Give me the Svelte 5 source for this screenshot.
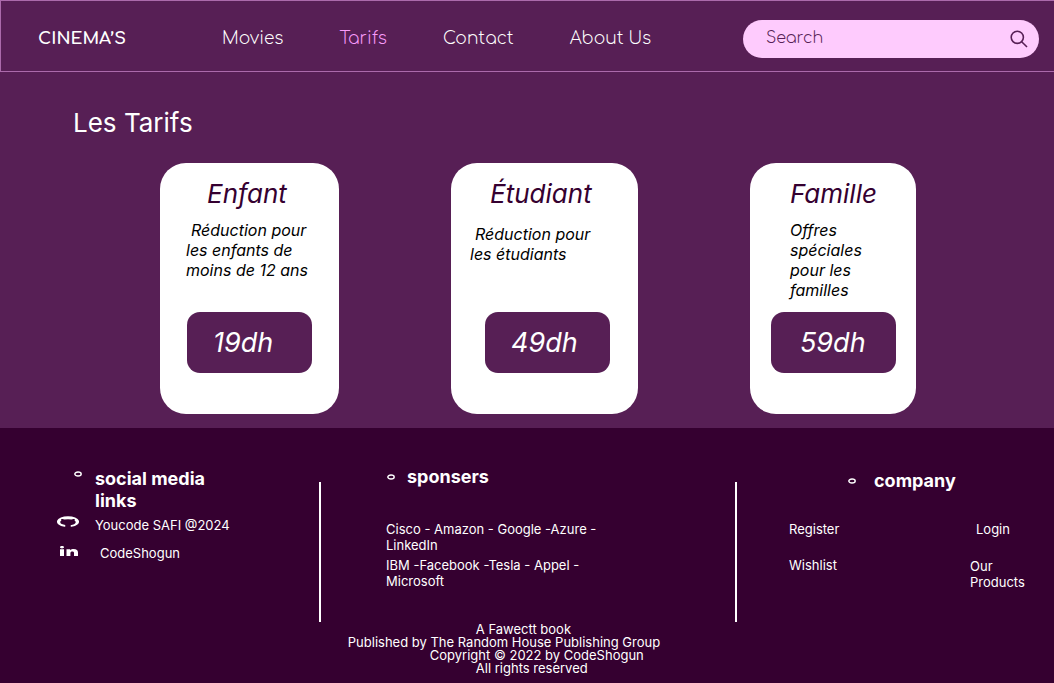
<script>
  const links = ['Movies', 'Tarifs', 'Contact', 'About Us'];
  const active = 'Tarifs';

  const plans = [
    { kind: 'child', name: 'Enfant', text: 'Réduction pour les enfants de moins de 12 ans', price: '19dh', indent: true },
    { kind: 'student', name: 'Étudiant', text: 'Réduction pour les étudiants', price: '49dh', indent: true },
    { kind: 'family', name: 'Famille', text: 'Offres spéciales pour les familles', price: '59dh', indent: false }
  ];
</script>

{#snippet ring()}
  <svg class="ring" viewBox="0 0 8 6" aria-hidden="true">
    <ellipse cx="4" cy="3" rx="3.2" ry="2" fill="none" stroke="currentColor" stroke-width="1.4" />
  </svg>
{/snippet}

<header class="topbar">
  <a class="brand" href="#home">CINEMA’S</a>
  <nav>
    {#each links as link}
      <a href="#{link}" class:active={link === active}>{link}</a>
    {/each}
  </nav>
  <form class="search" role="search">
    <input type="search" placeholder="Search" aria-label="Search" />
    <button type="button" aria-label="Submit search">
      <svg viewBox="0 0 18 18" aria-hidden="true">
        <circle cx="7.3" cy="7.3" r="6.1" />
        <path d="M11.7 11.7 17 17" />
      </svg>
    </button>
  </form>
</header>

<main>
  <h1>Les Tarifs</h1>
  <div class="plans">
    {#each plans as plan}
      <article class="plan {plan.kind}">
        <h2>{plan.name}</h2>
        <p class:indent={plan.indent}>{plan.text}</p>
        <button type="button">{plan.price}</button>
      </article>
    {/each}
  </div>
</main>

<footer>
  <div class="columns">
    <section class="social">
      <span class="mark">{@render ring()}</span>
      <h3>social media links</h3>
      <span class="mark">
        <svg class="github" viewBox="0 0 24 24" preserveAspectRatio="none" aria-hidden="true">
          <path d="M12 .3a12 12 0 0 0-3.8 23.4c.6.1.8-.3.8-.6v-3.600c-2.600-.5-5.500-1.600-5.500-6.700 0-1.200.5-2.300 1.300-3.100-.2-.4-.6-1.600 0-3.200 0 0 1-.3 3.400 1.200a11.500 11.500 0 0 1 7.600 0c2.300-1.500 3.300-1.200 3.300-1.200.6 1.600.2 2.800 0 3.200.9.8 1.300 1.900 1.300 3.200 0 4.600-2.800 6-5.400 6.600v3.600c0 .3.1.7.8.6A12 12 0 0 0 12 .3" />
        </svg>
      </span>
      <a href="#youcode">Youcode SAFI @2024</a>
      <span class="mark">
        <svg class="linkedin" viewBox="0 0 18 10" aria-hidden="true">
          <path d="M0 3.3h4V10H0zM0 1.2C0 .5.8 0 2 0s2 .5 2 1.2-.8 1.2-2 1.2S0 1.9 0 1.2zM6.5 3.3h3.7v.9c.7-.7 1.9-1.1 3.4-1.1 3 0 4.4 1.2 4.4 3.4V10h-4V6.9c0-1-.5-1.5-1.7-1.5s-1.9.6-1.9 1.6v3H6.5z" />
        </svg>
      </span>
      <a class="shogun" href="#codeshogun">CodeShogun</a>
    </section>

    <div class="divider"></div>

    <section class="sponsors">
      <h3>{@render ring()}sponsers</h3>
      <p>Cisco - Amazon - Google -Azure - LinkedIn</p>
      <p>IBM -Facebook -Tesla - Appel - Microsoft</p>
    </section>

    <div class="divider"></div>

    <section class="company">
      <h3>{@render ring()}company</h3>
      <div class="company-links">
        <a href="#register">Register</a>
        <a class="login" href="#login">Login</a>
        <a href="#wishlist">Wishlist</a>
        <a class="products" href="#products">Our Products</a>
      </div>
    </section>
  </div>

  <div class="legal">
    <p class="step-two">A Fawectt book</p>
    <p>Published by The Random House Publishing Group</p>
    <p class="step-one">Copyright © 2022 by CodeShogun</p>
    <p class="step-two">All rights reserved</p>
  </div>
</footer>

<style>
  :global(body) {
    margin: 0;
    background: #350030;
    font-family: Inter, sans-serif;
    color: #fff;
  }

  h1, h2, h3, p {
    margin: 0;
    font-weight: 400;
  }

  a {
    color: inherit;
    text-decoration: none;
  }

  button {
    font: inherit;
    color: inherit;
    border: 0;
    cursor: pointer;
  }

  .topbar {
    box-sizing: border-box;
    min-height: 72px;
    display: flex;
    align-items: center;
    padding: 6px 15px 0 37px;
    border: solid #ab6aab;
    border-width: 1px 0 1px 1px;
    background: #571f55;
    font-family: Comfortaa, sans-serif;
    font-size: 17px;
    line-height: 24px;
  }

  .brand {
    width: 184px;
    font-weight: 700;
  }

  nav {
    flex: 1;
    display: flex;
    gap: 56px;
    font-weight: 300;
  }

  nav .active {
    color: #f99bfb;
  }

  .search {
    box-sizing: border-box;
    width: 296px;
    height: 38px;
    display: flex;
    align-items: center;
    padding: 0 11px 0 23px;
    border-radius: 19px;
    background: #fecbfd;
    color: #571f55;
  }

  .search input {
    flex: 1;
    min-width: 0;
    padding: 0 0 3px;
    border: 0;
    outline: 0;
    background: none;
    font: inherit;
    font-size: 16px;
    font-weight: 300;
    color: inherit;
  }

  .search input::placeholder {
    color: inherit;
    opacity: 1;
  }

  .search button {
    display: flex;
    padding: 0;
    background: none;
  }

  .search svg {
    width: 18px;
    height: 18px;
    fill: none;
    stroke: currentColor;
    stroke-width: 1.6;
  }

  main {
    padding: 33px 0 14px;
    background: #571f55;
  }

  h1 {
    padding-left: 73px;
    font-size: 26px;
    line-height: 36px;
  }

  .plans {
    display: grid;
    grid-template-columns: 179fr 187fr 166fr;
    gap: 112px;
    padding: 22px 138px 0 160px;
  }

  .plan {
    box-sizing: border-box;
    min-height: 251px;
    display: flex;
    flex-direction: column;
    padding: 14px 0 41px;
    border-radius: 26px;
    background: #fff;
    color: #000;
    font-style: italic;
  }

  .plan h2 {
    color: #350030;
    font-size: 26px;
    line-height: 34px;
  }

  .plan p {
    flex: 1;
    padding-top: 9px;
    font-size: 16px;
    line-height: 20px;
  }

  .plan .indent {
    text-indent: 5px;
  }

  .plan button {
    width: 125px;
    height: 61px;
    padding: 0 26px;
    border-radius: 13px;
    background: #571f55;
    color: #fff;
    font-size: 27px;
    text-align: left;
  }

  .child h2 { padding-left: 47px; }
  .child p { padding-left: 26px; padding-right: 20px; }
  .child button { margin-left: 27px; }

  .student h2 { padding-left: 39px; }
  .student p { padding: 13px 36px 0 19px; }
  .student button { margin-left: 34px; }

  .family h2 { padding-left: 40px; }
  .family p { padding-left: 40px; padding-right: 40px; }
  .family button { margin-left: 21px; padding-left: 29px; }

  footer {
    background: #350030;
    font-size: 13px;
    line-height: 16px;
  }

  .columns {
    display: grid;
    grid-template-columns: 319fr 2px 414fr 2px 317fr;
    min-height: 194px;
  }

  .divider {
    margin-top: 54px;
    background: #fff;
  }

  h3 {
    display: flex;
    align-items: center;
    font-size: 18px;
    font-weight: 700;
    line-height: 22px;
  }

  .ring {
    width: 8px;
    height: 6px;
  }

  .social {
    display: grid;
    grid-template-columns: 22px 120px;
    column-gap: 16px;
    align-content: start;
    padding: 40px 0 0 57px;
  }

  .social a {
    padding-top: 5px;
    line-height: 16px;
    margin-bottom: 7px;
    white-space: nowrap;
  }

  .social .shogun {
    padding-left: 5px;
  }

  .mark {
    display: flex;
    justify-content: flex-end;
    align-items: flex-start;
  }

  .mark .ring {
    margin-top: 3px;
    margin-right: -3px;
  }

  .github {
    width: 22px;
    height: 11px;
    margin-top: 4px;
    fill: #fff;
  }

  .linkedin {
    width: 18px;
    height: 10px;
    margin: 6px 1px 0 0;
    fill: #fff;
  }

  .sponsors {
    padding: 38px 130px 0 65px;
  }

  .sponsors h3 {
    gap: 12px;
    padding: 0 0 33px 1px;
  }

  .sponsors p {
    padding-bottom: 4px;
  }

  .company {
    padding: 42px 0 0 52px;
  }

  .company h3 {
    gap: 18px;
    padding-left: 59px;
    padding-bottom: 29px;
  }

  .company-links {
    display: grid;
    grid-template-columns: 181fr 84fr;
    row-gap: 20px;
  }

  .login {
    padding-left: 6px;
  }

  .products {
    width: 60px;
    padding-top: 1px;
  }

  .legal {
    padding: 1px 0 8px 33%;
    line-height: 13px;
  }

  .step-one {
    padding-left: 82px;
  }

  .step-two {
    padding-left: 128px;
  }
</style>
